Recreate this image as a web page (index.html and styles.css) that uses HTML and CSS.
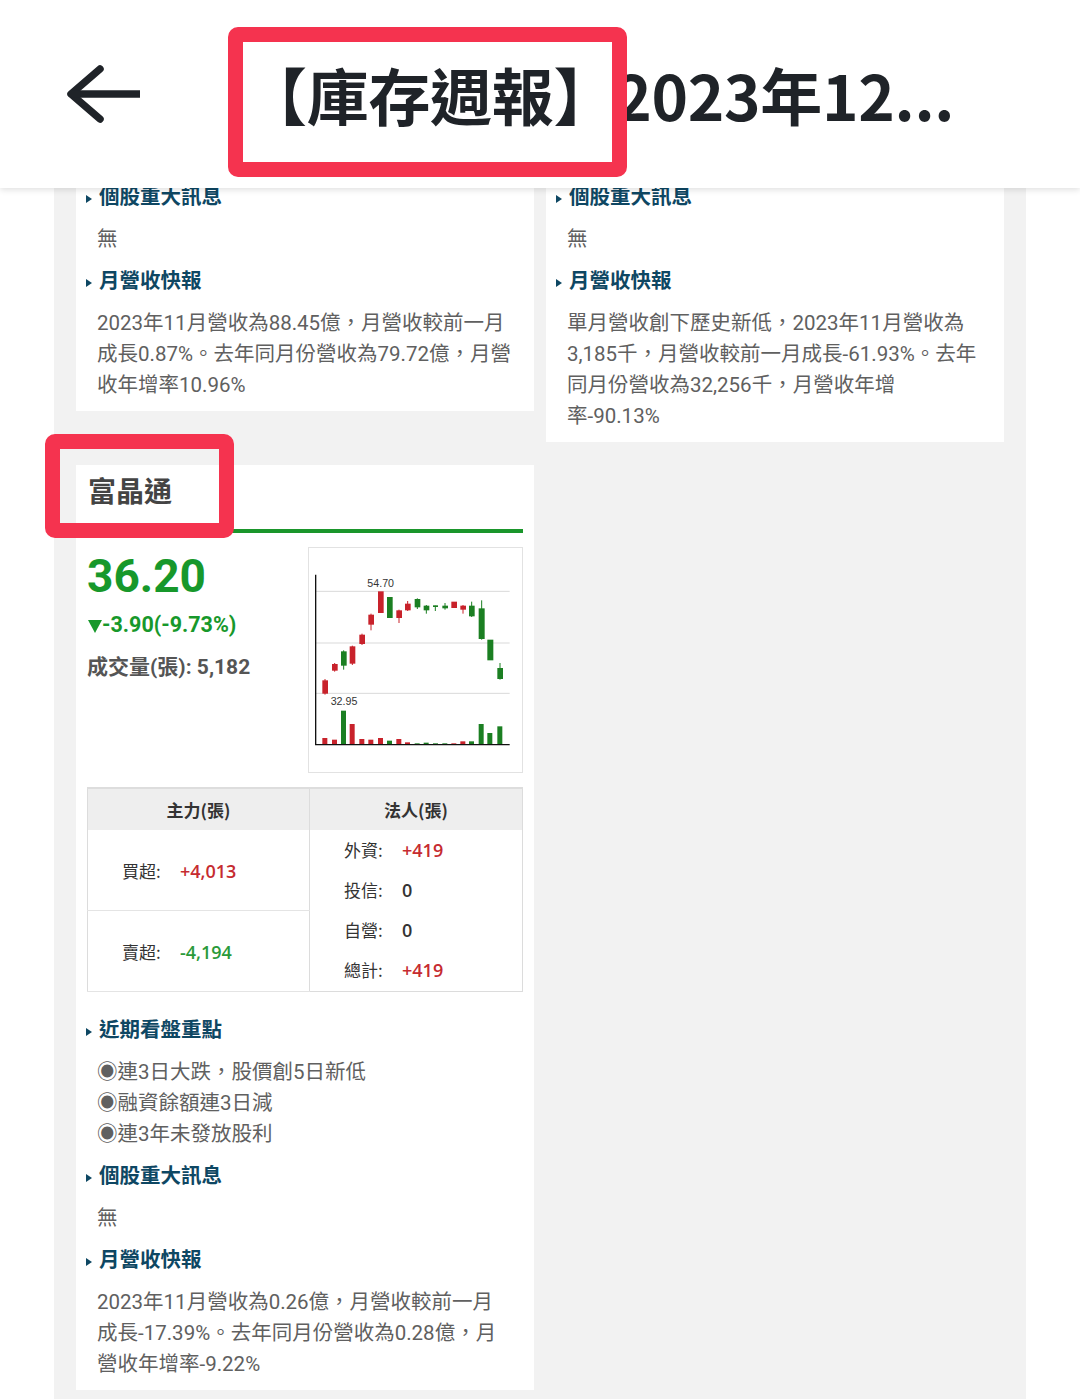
FILE: index.html
```html
<!DOCTYPE html>
<html lang="zh-Hant">

<head>
    <meta charset="UTF-8">
    <meta name="viewport" content="width=device-width, initial-scale=1.0">
    <title>【庫存週報】</title>
    <link rel="stylesheet" href="styles.css">
</head>

<body>
    <header class="topbar">
        <svg class="back" viewBox="0 0 80 64" aria-hidden="true">
            <path d="M36 7 L7 32 L36 57" fill="none" stroke="#1f2328" stroke-width="7.5" stroke-linecap="round" stroke-linejoin="round" />
            <path d="M8 32 H76" stroke="#1f2328" stroke-width="7.5" />
        </svg>
        <h1 class="topbar-title">【庫存週報】2023年12...</h1>
    </header>

    <!-- 標註框 -->
    <div class="mark mark-title"></div>
    <div class="mark mark-name"></div>

    <main class="page">
        <div class="grid">
            <article class="card">
                <h3 class="sec-title">個股重大訊息</h3>
                <p class="sec-text">無</p>
                <h3 class="sec-title">月營收快報</h3>
                <p class="sec-text">2023年11月營收為88.45億，月營收較前一月成長0.87%。去年同月份營收為79.72億，月營收年增率10.96%</p>
            </article>

            <article class="card">
                <h3 class="sec-title">個股重大訊息</h3>
                <p class="sec-text">無</p>
                <h3 class="sec-title">月營收快報</h3>
                <p class="sec-text">單月營收創下歷史新低，2023年11月營收為3,185千，月營收較前一月成長-61.93%。去年同月份營收為32,256千，月營收年增率-90.13%</p>
            </article>

            <article class="card stock">
                <h2 class="stock-name">富晶通</h2>

                <div class="summary">
                    <div class="quote">
                        <div class="price">36.20</div>
                        <div class="change"><span class="tri-down"></span>-3.90(-9.73%)</div>
                        <div class="volume">成交量(張): 5,182</div>
                    </div>
                    <div class="chart">
                        <svg viewBox="28 25 639 672" width="213" height="224">
                            <g class="grid-lines">
                                <line x1="48" y1="155" x2="630" y2="155" />
                                <line x1="48" y1="310" x2="630" y2="310" />
                                <line x1="48" y1="461" x2="630" y2="461" />
                            </g>
                            <text class="lbl" x="203" y="142">54.70</text>
                            <text class="lbl" x="93" y="497">32.95</text>

                            <g class="up">
                                <line x1="76" y1="418" x2="76" y2="465" /><rect x="68" y="422" width="17" height="40" />
                                <line x1="105" y1="370" x2="105" y2="396" /><rect x="97" y="373" width="17" height="20" />
                                <line x1="158" y1="318" x2="158" y2="376" /><rect x="150" y="320" width="17" height="52" />
                                <line x1="187" y1="282" x2="187" y2="316" /><rect x="179" y="285" width="17" height="28" />
                                <line x1="214" y1="222" x2="214" y2="272" /><rect x="206" y="225" width="17" height="30" />
                                <rect x="235" y="155" width="17" height="65" />
                                <line x1="298" y1="210" x2="298" y2="250" /><rect x="290" y="212" width="17" height="23" />
                                <line x1="324" y1="184" x2="324" y2="214" /><rect x="316" y="192" width="17" height="20" />
                                <rect x="455" y="186" width="17" height="19" />
                                <line x1="490" y1="196" x2="490" y2="222" /><rect x="482" y="198" width="17" height="12" />
                            </g>
                            <g class="dn">
                                <line x1="132" y1="332" x2="132" y2="390" /><rect x="124" y="335" width="17" height="43" />
                                <rect x="262" y="172" width="17" height="63" />
                                <line x1="353" y1="176" x2="353" y2="208" /><rect x="345" y="178" width="17" height="25" />
                                <line x1="380" y1="196" x2="380" y2="222" /><rect x="372" y="198" width="17" height="14" />
                                <line x1="407" y1="198" x2="407" y2="214" /><rect x="400" y="197" width="15" height="5" />
                                <line x1="436" y1="190" x2="436" y2="210" /><rect x="428" y="198" width="17" height="8" />
                                <line x1="516" y1="186" x2="516" y2="232" /><rect x="508" y="198" width="17" height="32" />
                                <line x1="546" y1="182" x2="546" y2="300" /><rect x="537" y="206" width="18" height="92" />
                                <rect x="563" y="300" width="18" height="62" />
                                <line x1="601" y1="370" x2="601" y2="420" /><rect x="593" y="385" width="17" height="33" />
                            </g>

                            <g class="up">
                                <rect x="68" y="595" width="15" height="20" />
                                <rect x="97" y="600" width="15" height="15" />
                                <rect x="150" y="553" width="15" height="62" />
                                <rect x="179" y="598" width="15" height="17" />
                                <rect x="206" y="600" width="15" height="15" />
                                <rect x="235" y="595" width="15" height="20" />
                                <rect x="290" y="598" width="15" height="17" />
                                <rect x="316" y="608" width="15" height="7" />
                                <rect x="455" y="611" width="15" height="4" />
                                <rect x="482" y="605" width="15" height="10" />
                            </g>
                            <g class="dn">
                                <rect x="124" y="513" width="15" height="102" />
                                <rect x="262" y="603" width="15" height="12" />
                                <rect x="345" y="611" width="15" height="4" />
                                <rect x="372" y="609" width="15" height="6" />
                                <rect x="400" y="611" width="15" height="4" />
                                <rect x="428" y="611" width="15" height="4" />
                                <rect x="508" y="605" width="15" height="10" />
                                <rect x="537" y="553" width="15" height="62" />
                                <rect x="563" y="580" width="15" height="35" />
                                <rect x="593" y="560" width="15" height="55" />
                            </g>

                            <path class="axis" d="M48 105 V615 H630" />
                        </svg>
                    </div>
                </div>

                <table class="chips">
                    <tr>
                        <th class="col-main">主力(張)</th>
                        <th>法人(張)</th>
                    </tr>
                    <tr>
                        <td class="main-cell"><span class="k">買超:</span><span class="v up-txt">+4,013</span></td>
                        <td class="inst-cell" rowspan="2">
                            <div><span class="k">外資:</span><span class="v up-txt">+419</span></div>
                            <div><span class="k">投信:</span><span class="v">0</span></div>
                            <div><span class="k">自營:</span><span class="v">0</span></div>
                            <div><span class="k">總計:</span><span class="v up-txt">+419</span></div>
                        </td>
                    </tr>
                    <tr>
                        <td class="main-cell"><span class="k">賣超:</span><span class="v dn-txt">-4,194</span></td>
                    </tr>
                </table>

                <div class="notes">
                    <h3 class="sec-title">近期看盤重點</h3>
                    <p class="sec-text">◉連3日大跌，股價創5日新低<br>◉融資餘額連3日減<br>◉連3年未發放股利</p>
                    <h3 class="sec-title">個股重大訊息</h3>
                    <p class="sec-text">無</p>
                    <h3 class="sec-title">月營收快報</h3>
                    <p class="sec-text">2023年11月營收為0.26億，月營收較前一月成長-17.39%。去年同月份營收為0.28億，月營收年增率-9.22%</p>
                </div>
            </article>
        </div>
    </main>
</body>

</html>
```

FILE: styles.css
```css
body {
    margin: 0;
    background: #fff;
    font-family: Roboto, "Noto Sans CJK TC", sans-serif;
    color: #333;
}

.topbar {
    position: fixed;
    top: 0;
    left: 0;
    right: 0;
    height: 188px;
    background: #fff;
    box-shadow: 0 2px 6px rgba(0, 0, 0, 0.12);
    display: flex;
    align-items: center;
    z-index: 10;
}

.back {
    width: 80px;
    height: 64px;
    margin-left: 64px;
    flex-shrink: 0;
}

.topbar-title {
    margin: 0 0 0 101px;
    font-family: "Noto Sans CJK TC", sans-serif;
    font-size: 62px;
    font-weight: 700;
    letter-spacing: -0.3px;
    color: #1f2328;
    white-space: nowrap;
    line-height: 1;
}

.mark {
    position: absolute;
    box-sizing: border-box;
    border: 15px solid #f5334f;
    border-radius: 10px;
    z-index: 20;
}

.mark-title {
    left: 228px;
    top: 27px;
    width: 399px;
    height: 150px;
}

.mark-name {
    left: 45px;
    top: 434px;
    width: 189px;
    height: 104px;
}

.page {
    margin: 0 54px;
    background: #f2f2f2;
    padding: 172px 22px 20px;
}

.grid {
    display: grid;
    grid-template-columns: 458px 458px;
    column-gap: 12px;
    row-gap: 23px;
    align-items: start;
}

.card {
    background: #fff;
    padding: 10px 11px 10px 10px;
    display: flex;
    flex-direction: column;
    gap: 11px;
}

.sec-title {
    margin: 0;
    font-size: 20.5px;
    font-weight: 700;
    line-height: 31px;
    color: #0e4763;
    display: flex;
    align-items: center;
}

.sec-title::before {
    content: "";
    border-left: 6px solid #0e4763;
    border-top: 4.5px solid transparent;
    border-bottom: 4.5px solid transparent;
    margin: 2px 7px 0 0;
}

.sec-text {
    margin: 0;
    padding: 0 10px 0 11px;
    font-size: 20.5px;
    line-height: 31px;
    color: #606060;
}

/* 個股卡 */
.stock {
    padding-top: 0;
    gap: 0;
}

.stock-name {
    margin: 0;
    padding: 8px 0 16px 2px;
    font-size: 28px;
    font-weight: 700;
    line-height: 40px;
    color: #444;
    border-bottom: 4px solid #1a962b;
}

.summary {
    margin-top: 14px;
    display: flex;
    justify-content: space-between;
}

.quote {
    padding-left: 1px;
}

.price {
    font-size: 46px;
    font-weight: 700;
    line-height: 58px;
    color: #17982b;
}

.change {
    font-size: 21.5px;
    font-weight: 700;
    line-height: 40px;
    color: #17982b;
    display: flex;
    align-items: center;
}

.tri-down {
    display: inline-block;
    border-left: 7px solid transparent;
    border-right: 7px solid transparent;
    border-top: 13px solid #17982b;
    margin: 3px 0 0 1px;
}

.volume {
    font-size: 21px;
    font-weight: 700;
    line-height: 44px;
    color: #555;
}

.chart {
    width: 215px;
    height: 226px;
    box-sizing: border-box;
    border: 1px solid #e2e2e2;
}

.chart svg {
    display: block;
}

.grid-lines line {
    stroke: #d9d9d9;
    stroke-width: 3;
}

.axis {
    fill: none;
    stroke: #111;
    stroke-width: 4;
}

.lbl {
    font-family: "Liberation Sans", Arial, sans-serif;
    font-size: 32px;
    fill: #333;
}

.up rect {
    fill: #c8222b;
}

.up line {
    stroke: #c8222b;
    stroke-width: 3;
}

.dn rect {
    fill: #1b7f22;
}

.dn line {
    stroke: #1b7f22;
    stroke-width: 3;
}

.chips {
    margin: 14px 0 0 1px;
    width: 436px;
    border-collapse: collapse;
    border: 1px solid #dcdcdc;
    font-family: "Noto Sans CJK TC", sans-serif;
    font-size: 17px;
    color: #333;
}

.chips th {
    height: 41px;
    padding: 0;
    background: #eee;
    font-weight: 700;
    text-align: center;
    border-top: 2px solid #ddd;
}

.col-main {
    width: 221px;
    border-right: 1px solid #dcdcdc;
}

.main-cell {
    height: 80px;
    padding: 0 0 0 34px;
    border-right: 1px solid #dcdcdc;
    border-bottom: 1px solid #e4e4e4;
}

.inst-cell {
    padding: 0 0 0 34px;
    vertical-align: top;
}

.inst-cell div {
    line-height: 40px;
}

.k {
    display: inline-block;
    width: 58px;
}

.v {
    font-family: "Open Sans", sans-serif;
    font-size: 18px;
    font-weight: 600;
}

.up-txt {
    color: #c62b30;
}

.dn-txt {
    color: #2a9a3a;
}

.notes {
    margin-top: 23px;
    display: flex;
    flex-direction: column;
    gap: 11px;
}
```
